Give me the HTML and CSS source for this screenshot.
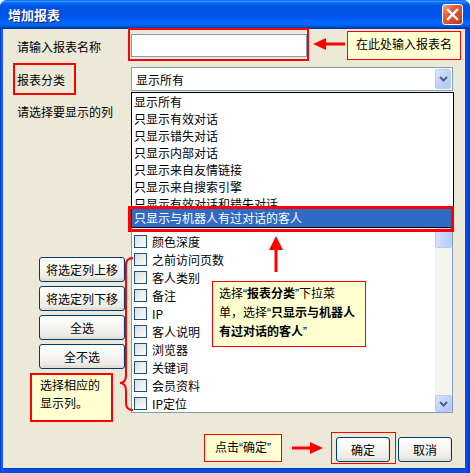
FILE: index.html
```html
<!DOCTYPE html>
<html lang="zh-CN">
<head>
  <meta charset="UTF-8">
  <title>增加报表</title>
  <link rel="stylesheet" href="styles.css">
</head>
<body>
  <div class="window">
    <!-- 标题栏 -->
    <div class="titlebar">
      <span class="title">增加报表</span>
      <span class="close-btn">
        <svg width="13" height="13" viewBox="0 0 13 13"><path d="M2 2 L11 11 M11 2 L2 11" stroke="#fff" stroke-width="2.4" stroke-linecap="square"/></svg>
      </span>
    </div>

    <div class="client">
      <div class="row row-name">
        <label class="field-label" for="report-name">请输入报表名称</label>
        <input id="report-name" class="text-input" type="text">
      </div>

      <div class="row row-type">
        <span class="field-label">报表分类</span>
        <div class="combo">
          <div class="combo-box">
            <span class="combo-value">显示所有</span>
            <span class="drop-btn">
              <svg width="9" height="6" viewBox="0 0 9 6"><path d="M1 1 L4.5 4.5 L8 1" fill="none" stroke="#4d6185" stroke-width="2"/></svg>
            </span>
          </div>
          <!-- 展开的下拉列表 -->
          <ul class="combo-list">
            <li>显示所有</li>
            <li>只显示有效对话</li>
            <li>只显示错失对话</li>
            <li>只显示内部对话</li>
            <li>只显示来自友情链接</li>
            <li>只显示来自搜索引擎</li>
            <li class="cut">只显示有效对话和错失对话</li>
            <li class="selected">只显示与机器人有过对话的客人</li>
          </ul>
        </div>
      </div>

      <div class="row row-cols">
        <div class="side">
          <span class="field-label">请选择要显示的列</span>
          <div class="side-buttons">
            <button class="btn side-btn">将选定列上移</button>
            <button class="btn side-btn">将选定列下移</button>
            <button class="btn side-btn">全选</button>
            <button class="btn side-btn">全不选</button>
          </div>
        </div>

        <div class="col-list">
          <!-- 上面几行被下拉列表挡住 -->
          <ul class="col-items">
            <li><span class="check"></span>颜色深度</li>
            <li><span class="check"></span>之前访问页数</li>
            <li><span class="check"></span>客人类别</li>
            <li><span class="check"></span>备注</li>
            <li><span class="check"></span>IP</li>
            <li><span class="check"></span>客人说明</li>
            <li><span class="check"></span>浏览器</li>
            <li><span class="check"></span>关键词</li>
            <li><span class="check"></span>会员资料</li>
            <li><span class="check"></span>IP定位</li>
          </ul>
          <div class="scrollbar">
            <span class="sb-btn"></span>
            <span class="sb-thumb"></span>
            <span class="sb-btn sb-down">
              <svg width="9" height="6" viewBox="0 0 9 6"><path d="M1 1 L4.5 4.5 L8 1" fill="none" stroke="#4d6185" stroke-width="2"/></svg>
            </span>
          </div>
        </div>
      </div>

      <div class="footer">
        <button class="btn foot-btn">确定</button>
        <button class="btn foot-btn">取消</button>
      </div>
    </div>

    <!-- 说明标注 -->
    <div class="mark frame-name"></div>
    <svg class="mark arrow-left" width="34" height="14" viewBox="0 0 34 14">
      <polygon points="1,7 14,1 14,13" fill="#f00"/>
      <rect x="13" y="5.5" width="20" height="3" fill="#f00"/>
    </svg>
    <div class="mark note note-name">在此处输入报表名</div>

    <div class="mark frame-type"></div>
    <div class="mark frame-selected"></div>
    <svg class="mark arrow-up" width="16" height="38" viewBox="0 0 16 38">
      <polygon points="8,1 15,15 1,15" fill="#f00"/>
      <rect x="6.5" y="14" width="3" height="23" fill="#f00"/>
    </svg>
    <div class="mark note note-type">选择“<b>报表分类</b>”下拉菜<br>单，选择“<b>只显示与机器人</b><br><b>有过对话的客人</b>”</div>

    <svg class="mark brace" width="20" height="160" viewBox="0 0 20 160">
      <path d="M17,4 Q10,4 10,11 L10,121 Q10,129 4,129 Q10,129 10,137 L10,149 Q10,156 17,156" fill="none" stroke="#f00" stroke-width="2"/>
    </svg>
    <div class="mark note note-cols">选择相应的<br>显示列。</div>

    <div class="mark note note-ok">点击“确定”</div>
    <svg class="mark arrow-right" width="34" height="14" viewBox="0 0 34 14">
      <rect x="2" y="5.5" width="20" height="3" fill="#f00"/>
      <polygon points="20,1 33,7 20,13" fill="#f00"/>
    </svg>
    <div class="mark frame-ok"></div>
  </div>
</body>
</html>
```

FILE: styles.css
```css
/* 基础 */
* {
  margin: 0;
  padding: 0;
  box-sizing: border-box;
}

body {
  font-family: "Noto Sans CJK SC", sans-serif;
  font-size: 12px;
  color: #000;
  background: #fff;
}

ul {
  list-style: none;
}

button,
input {
  font: inherit;
  color: inherit;
}

/* 窗口外框 */
.window {
  position: relative;
  width: 470px;
  height: 473px;
  display: flex;
  flex-direction: column;
  background: linear-gradient(to right, #0831d9, #1664ee 2px, #0a4ee0 4px, #0a4ee0 calc(100% - 4px), #0735c8);
  border-radius: 7px 7px 0 0;
  overflow: hidden;
}

.titlebar {
  flex: none;
  height: 29px;
  display: flex;
  align-items: center;
  justify-content: space-between;
  padding: 0 7px 0 8px;
  background: linear-gradient(to bottom, #0058ee 0%, #3593ff 4%, #288eff 6%, #127dff 8%, #036ffc 10%, #0262ee 14%, #0057e5 20%, #0054e3 24%, #0055eb 56%, #005bf5 66%, #026afe 76%, #0062ef 86%, #0052d6 92%, #0040ab 96%, #003092 100%);
}

.title {
  color: #fff;
  font-size: 13px;
  font-weight: bold;
  text-shadow: 1px 1px 0 #0a1e80;
}

.close-btn {
  width: 21px;
  height: 21px;
  display: flex;
  align-items: center;
  justify-content: center;
  border: 1px solid #fff;
  border-radius: 3px;
  background: linear-gradient(135deg, #f0a58a, #e0603a 35%, #c8441f 80%, #b8391a);
}

/* 窗口内容 */
.client {
  flex: 1;
  margin: 0 5px 5px 3px;
  padding: 5px 12px 6px 14px;
  background: #ece9d8;
  border-bottom: 1px solid #0a3ccb;
}

.row {
  display: flex;
}

.row-name,
.row-type {
  align-items: center;
}

.row-type {
  margin-top: 10px;
}

.row-cols {
  margin-top: 6px;
  align-items: flex-start;
}

.field-label {
  display: block;
  width: 114px;
  flex: none;
  line-height: 14px;
}

.row-name .field-label {
  padding-top: 3px;
}

.row-type .field-label {
  padding-top: 2px;
}

.text-input {
  width: 176px;
  height: 23px;
  border: 1px solid #7f9db9;
  background: #fff;
  padding: 0 3px;
  outline: none;
}

/* 下拉框 */
.combo {
  position: relative;
  width: 322px;
}

.combo-box {
  height: 24px;
  display: flex;
  align-items: center;
  justify-content: space-between;
  border: 1px solid #7f9db9;
  background: #fff;
  padding: 1px 1px 1px 4px;
}

.drop-btn,
.sb-btn {
  width: 16px;
  height: 20px;
  display: flex;
  align-items: center;
  justify-content: center;
  border: 1px solid #b9cbf3;
  border-radius: 2px;
  background: linear-gradient(135deg, #dce6fd, #c1d3fb 50%, #b0c6f5);
}

.combo-list {
  position: absolute;
  top: 25px;
  left: 0;
  width: 323px;
  z-index: 2;
  border: 1px solid #000;
  background: #fff;
}

.combo-list li {
  height: 17px;
  line-height: 17px;
  padding-left: 2px;
  white-space: nowrap;
  overflow: hidden;
}

.combo-list li.cut {
  height: 14px;
}

.combo-list li.selected {
  height: 18px;
  line-height: 18px;
  background: #316ac5;
  color: #fff;
}

/* 左侧按钮 */
.side {
  width: 114px;
  flex: none;
  padding-top: 8px;
}

.side-buttons {
  display: flex;
  flex-direction: column;
  gap: 4px;
  margin: 138px 0 0 22px;
}

.btn {
  height: 25px;
  border: 1px solid #003c74;
  border-radius: 3px;
  background: linear-gradient(to bottom, #fff, #f6f6f3 45%, #ecebe5 85%, #d8d3c7);
  box-shadow: inset -1px -1px 0 #e3e0d6;
  cursor: pointer;
}

.side-btn {
  width: 86px;
}

/* 列选择框 */
.col-list {
  width: 322px;
  height: 316px;
  display: flex;
  border: 1px solid #7f9db9;
  background: #fff;
}

.col-items {
  flex: 1;
  padding: 134px 0 0 2px;
}

.col-items li {
  height: 18px;
  display: flex;
  align-items: center;
}

.check {
  width: 13px;
  height: 13px;
  margin-right: 5px;
  border: 1px solid #1c5180;
  background: linear-gradient(135deg, #dcdcd7, #fff);
}

.scrollbar {
  width: 17px;
  display: flex;
  flex-direction: column;
  background: #f4f3ee;
}

.sb-btn {
  width: 17px;
  height: 17px;
}

.sb-thumb {
  height: 133px;
  border: 1px solid #b9cbf3;
  border-radius: 2px;
  background: linear-gradient(to right, #d4e0fd, #c6d5fb 50%, #b9ccf6);
}

.sb-down {
  margin-top: auto;
}

/* 底部按钮 */
.footer {
  display: flex;
  justify-content: flex-end;
  gap: 8px;
  margin-top: 24px;
  padding-right: 1px;
}

.foot-btn {
  width: 54px;
}

/* 红色标注 */
.mark {
  position: absolute;
  z-index: 5;
}

.note {
  font-family: "Liberation Sans", "Noto Sans CJK SC", sans-serif;
  background: #ffffd2;
  border: 1px solid #f00;
  line-height: 18px;
  white-space: nowrap;
}

.frame-name {
  left: 128px;
  top: 28px;
  width: 181px;
  height: 33px;
  border: 2px solid #f00;
}

.arrow-left {
  left: 312px;
  top: 37px;
}

.note-name {
  left: 347px;
  top: 31px;
  width: 114px;
  height: 29px;
  line-height: 27px;
  text-align: center;
}

.frame-type {
  left: 13px;
  top: 63px;
  width: 63px;
  height: 32px;
  border: 2px solid #f00;
}

.frame-selected {
  left: 128px;
  top: 206px;
  width: 326px;
  height: 26px;
  border: 3px solid #f00;
}

.arrow-up {
  left: 268px;
  top: 235px;
}

.note-type {
  left: 212px;
  top: 281px;
  width: 154px;
  height: 66px;
  padding: 3px 6px;
  line-height: 19px;
}

.brace {
  left: 116px;
  top: 254px;
}

.note-cols {
  left: 30px;
  top: 373px;
  width: 83px;
  height: 49px;
  border-width: 2px;
  padding: 2px 8px;
}

.note-ok {
  left: 204px;
  top: 434px;
  width: 78px;
  height: 28px;
  line-height: 26px;
  text-align: center;
}

.arrow-right {
  left: 290px;
  top: 441px;
}

.frame-ok {
  left: 331px;
  top: 432px;
  width: 65px;
  height: 32px;
  border: 1px solid #f00;
}
```
